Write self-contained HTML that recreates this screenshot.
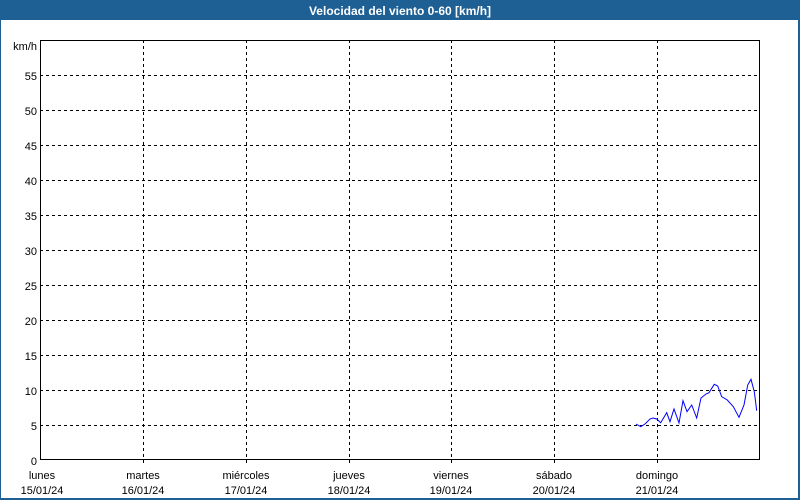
<!DOCTYPE html>
<html><head><meta charset="utf-8"><style>
html,body{margin:0;padding:0;background:#fff;}
svg{display:block;font-family:"Liberation Sans",sans-serif;}
</style></head><body>
<svg width="800" height="500" viewBox="0 0 800 500" xmlns="http://www.w3.org/2000/svg">
<rect x="0" y="0" width="800" height="500" fill="#1e5f94"/>
<rect x="1" y="20" width="797" height="478" fill="#fff"/>
<text x="400" y="15" fill="#fff" font-size="12" font-weight="bold" text-anchor="middle">Velocidad del viento 0-60 [km/h]</text>
<g stroke="#000" stroke-width="1" stroke-dasharray="3,3" fill="none" shape-rendering="crispEdges">
<path d="M40 75.5H760M40 110.5H760M40 145.5H760M40 180.5H760M40 215.5H760M40 250.5H760M40 285.5H760M40 320.5H760M40 355.5H760M40 390.5H760M40 425.5H760"/>
<path d="M143.5 40V466M246.5 40V466M349.5 40V466M451.5 40V466M554.5 40V466M657.5 40V466"/>
</g>
<rect x="40.5" y="40.5" width="719" height="419" fill="none" stroke="#000" stroke-width="1.3" shape-rendering="crispEdges"/>
<g font-size="11" fill="#000" text-anchor="end">
<text x="37" y="50">km/h</text>
<text x="37" y="80">55</text><text x="37" y="115">50</text><text x="37" y="150">45</text>
<text x="37" y="185">40</text><text x="37" y="220">35</text><text x="37" y="255">30</text>
<text x="37" y="290">25</text><text x="37" y="325">20</text><text x="37" y="360">15</text>
<text x="37" y="395">10</text><text x="37" y="430">5</text><text x="37" y="465">0</text>
</g>
<g font-size="11" fill="#000" text-anchor="middle">
<text x="42" y="479">lunes</text><text x="42" y="494">15/01/24</text>
<text x="143" y="479">martes</text><text x="143" y="494">16/01/24</text>
<text x="246" y="479">miércoles</text><text x="246" y="494">17/01/24</text>
<text x="349" y="479">jueves</text><text x="349" y="494">18/01/24</text>
<text x="451" y="479">viernes</text><text x="451" y="494">19/01/24</text>
<text x="554" y="479">sábado</text><text x="554" y="494">20/01/24</text>
<text x="657" y="479">domingo</text><text x="657" y="494">21/01/24</text>
</g>
<polyline fill="none" stroke="#0000ff" stroke-width="1" points="636,424 640.7,426.7 645,424 650,419 653,418 656.7,419 660.7,422.7 666.7,412.7 670,421.7 674,409 679,423 683,400.7 687,411.7 691.7,405 696.7,418 701,398 706,394 709,392.7 714.3,384.3 717.7,386 721.7,396.7 727.3,400 733.3,406.7 739,417.3 744,405 747.7,385 751,379.3 754.3,391.7 756.7,410.7"/>
</svg>
</body></html>
